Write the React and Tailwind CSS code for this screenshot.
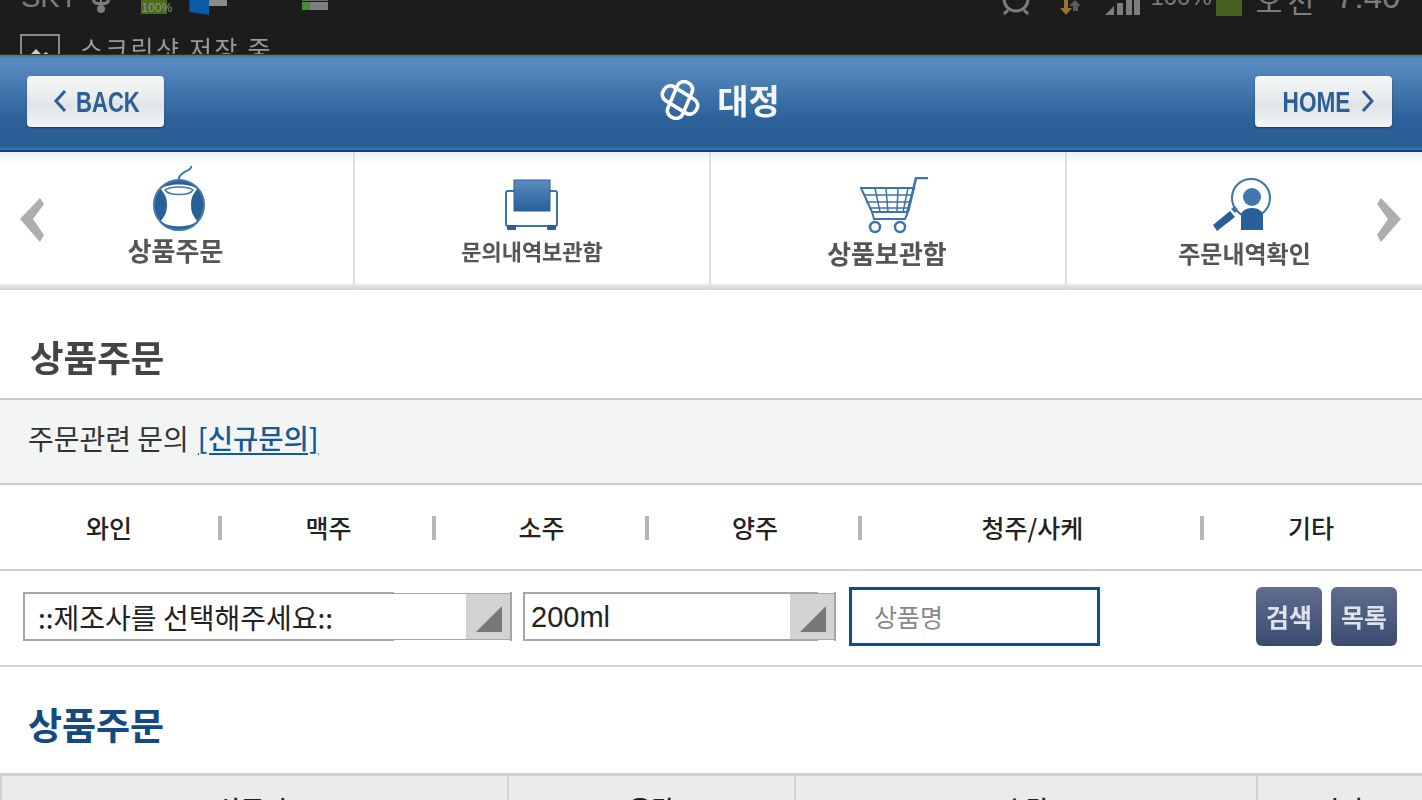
import React from 'react';

const tabs = [
  { label: '와인', width: 'w-[218px]', pad: '' },
  { label: '맥주', width: 'w-[214px]', pad: 'pl-[3px]' },
  { label: '소주', width: 'w-[213px]', pad: 'pl-[2px]' },
  { label: '양주', width: 'w-[213px]', pad: 'pl-[3px]' },
  { label: '청주/사케', width: 'w-[342px]', pad: 'pl-[3px]' },
  { label: '기타', width: 'flex-1', pad: 'pr-[4px]' },
];

// Mouse-on-a-ball icon for the order menu
const OrderIcon = () => (
  <svg className="blur-[0.4px]" width="56" height="68" viewBox="0 0 56 68" fill="none">
    <path d="M40 2c1 4-4 4-8 7s-5 5-4 10 3 4 4 6" stroke="#3f78ad" strokeWidth="2" />
    <circle cx="28" cy="41" r="25" fill="#2a6098" />
    <path d="M10 25c6-6 30-6 36 0-3 5-6 7-6 16s3 11 6 16c-6 7-30 7-36 0 3-5 6-7 6-16s-3-11-6-16z" fill="#fff" />
    <path d="M14 26c5-4 23-4 28 0-4 6-24 6-28 0z" fill="#fff" stroke="#3f78ad" strokeWidth="1.5" />
    <circle cx="28" cy="41" r="25" stroke="#3f78ad" strokeWidth="2" />
  </svg>
);

const SofaIcon = () => (
  <svg className="blur-[0.4px]" width="56" height="52" viewBox="0 0 56 52" fill="none">
    <rect x="2" y="12" width="51" height="35" rx="2" fill="#fff" stroke="#3b74ab" strokeWidth="2" />
    <rect x="3" y="46" width="9" height="5" rx="1" fill="#2a6098" />
    <rect x="43" y="46" width="9" height="5" rx="1" fill="#2a6098" />
    <rect x="10" y="1" width="36" height="31" fill="url(#sofa)" stroke="#2a6098" />
    <defs>
      <linearGradient id="sofa" x1="0" y1="0" x2="0" y2="1">
        <stop offset="0" stopColor="#5b8dbf" />
        <stop offset="1" stopColor="#27609a" />
      </linearGradient>
    </defs>
  </svg>
);

const CartIcon = () => (
  <svg className="blur-[0.4px]" width="70" height="58" viewBox="0 0 70 58" fill="none" stroke="#3b74ab">
    <path d="M68 1H56l-8 34" strokeWidth="2.5" />
    <path d="M1 11h53l-7 24H12z" strokeWidth="2" />
    <path d="M4 18h48M6 25h44M9 31h39M15 11l5 24M26 11l2 24M38 11l-1 24M48 11l-5 24" strokeWidth="1.5" />
    <path d="M12 35l2 7h31l3-7" strokeWidth="2" />
    <circle cx="15" cy="50" r="5" strokeWidth="2.5" />
    <circle cx="40" cy="50" r="5" strokeWidth="2.5" />
  </svg>
);

const SearchUserIcon = () => (
  <svg className="blur-[0.4px]" width="62" height="54" viewBox="0 0 62 54" fill="none">
    <circle cx="40" cy="20" r="19" stroke="#3b74ab" strokeWidth="2" />
    <circle cx="41" cy="19" r="9" fill="#3f78ad" />
    <path d="M30 52V38c0-5 5-8 11-8s11 3 11 8v14z" fill="#2a6098" />
    <path d="M2 47l17-14 5 6-18 14z" fill="#2a6098" />
    <path d="M20 31l4-3 3 4-3 3z" fill="#3b74ab" />
  </svg>
);

// Knot mark next to the company name: two crossed loops, turned like a pinwheel
const Logo = () => (
  <svg className="blur-[0.4px]" width="40" height="40" viewBox="0 0 40 40" fill="none" stroke="#fff" strokeWidth="3.6">
    <rect x="1" y="12" width="38" height="16" rx="7" transform="rotate(-67 20 20)" />
    <rect x="1" y="12" width="38" height="16" rx="7" transform="rotate(32 20 20)" />
  </svg>
);

const NavItem = ({ icon, label, labelSize, iconClass, border }) => (
  <div className={`flex flex-col items-center h-full ${border ? 'border-r-2 border-[#dcdfe0]' : ''}`}>
    <div className={`h-[80px] flex items-end ${iconClass}`}>{icon}</div>
    <span className={`mt-[3px] font-bold leading-[30px] text-[#555] blur-[0.7px] ${labelSize}`}>{label}</span>
  </div>
);

const HeaderButton = ({ children }) => (
  <button className="flex items-center justify-center w-[137px] h-[51px] pt-[3px] rounded-[4px] bg-[linear-gradient(#f5f7f8_0%,#e6e9eb_50%,#dfe3e5_55%,#f3f5f6_100%)] shadow-[0_1px_2px_rgba(0,0,0,0.4)] text-[#2b5f96] blur-[0.6px]">
    {children}
  </button>
);

const SelectBox = ({ width, arrow, split, children, textClass }) => (
  <div className={`relative flex items-center h-[49px] border-2 border-[#a6a6a6] bg-white ${width}`}>
    <span className={`flex-1 whitespace-nowrap text-[#222] ${textClass}`}>{children}</span>
    <div className={`flex items-end justify-end h-full bg-[#d3d3d3] pr-[8px] pb-[7px] ${arrow}`}>
      <svg width="26" height="26" viewBox="0 0 26 26"><path d="M26 0v26H0z" fill="#777" /></svg>
    </div>
    {/* the frame gets thinner toward the arrow */}
    <div className={`absolute right-0 -top-[2px] h-px bg-white ${split}`} />
    <div className={`absolute right-0 -bottom-[2px] h-px bg-white ${split}`} />
  </div>
);

const SmallButton = ({ children }) => (
  <button className="w-[66px] h-[59px] rounded-[6px] bg-[linear-gradient(#5f6d8e,#3b4a70)] text-[25px] font-bold text-[#dfe2e9]">
    <span className="blur-[0.5px] block">{children}</span>
  </button>
);

export default function App() {
  return (
    <div className="w-[1422px] h-[800px] overflow-hidden bg-white font-['Noto_Sans_CJK_KR','Noto_Sans',sans-serif]">
      {/* Phone status bar, cut off at the top */}
      <div className="h-[55px] overflow-hidden bg-[#1c1c1c] border-b border-[#3a2f12] text-[#7d7d7d]">
        <div className="flex items-start h-[34px] overflow-hidden">
          <span className="ml-[21px] -mt-[23px] text-[29px] leading-[40px] font-['Liberation_Sans']">SKT</span>
          <svg className="ml-[14px] -mt-[4px]" width="20" height="20" viewBox="0 0 20 20" fill="#7d7d7d">
            <rect x="9" y="0" width="2" height="12" />
            <path d="M1 4c1 5 4 5 9 5s8 0 9-5l-3-1c0 3-2 3-6 3S4 6 4 3z" />
            <circle cx="10" cy="13" r="4" />
          </svg>
          <div className="relative ml-[30px] w-[26px] h-[14px] bg-[#4d6a1c]">
            <span className="absolute left-0 top-[1px] text-[12px] leading-[14px] text-[#8f9a80] font-['Liberation_Sans']">100%</span>
          </div>
          <div className="ml-[22px] flex items-start">
            <div className="w-[20px] h-[15px] bg-[#0a5ba3] [clip-path:polygon(0_0,100%_0,100%_100%,0_80%)]" />
            <div className="w-[18px] h-[6px] bg-[#8a8a8a]" />
          </div>
          <div className="ml-[75px] w-[26px] flex flex-col gap-[1px]">
            <div className="h-[1px] bg-[#6a6a6a]" />
            <div className="h-[8px] flex">
              <div className="w-[8px] bg-[#4a8a32]" />
              <div className="flex-1 bg-[#7d7d7d]" />
            </div>
          </div>
          <svg className="ml-[672px] -mt-[4px]" width="32" height="20" viewBox="0 0 32 20" fill="none" stroke="#7d7d7d" strokeWidth="3">
            <circle cx="16" cy="3" r="12" />
            <path d="M4 18l4-4M28 18l-4-4" />
          </svg>
          <svg className="ml-[28px]" width="22" height="16" viewBox="0 0 22 16">
            <path d="M4 0h4v8h4l-6 7-6-7h4z" fill="#9a7434" />
            <path d="M15 0l6 6h-3v5h-5V6h-4z" fill="#5a5a5a" />
          </svg>
          <svg className="ml-[23px]" width="36" height="15" viewBox="0 0 36 15" fill="#7d7d7d">
            <path d="M0 15L9 6v9zM12 3h6v12h-6zM21 0h6v15h-6zM29 0h6v15h-6z" />
          </svg>
          <span className="ml-[9px] -mt-[23px] text-[24px] leading-[40px] font-['Liberation_Sans']">100%</span>
          <div className="ml-[4px] w-[26px] h-[16px] bg-[#475f1f]" />
          <span className="ml-[14px] -mt-[20px] text-[29px] leading-[40px] tracking-[5px]">오전</span>
          <span className="ml-[17px] -mt-[23px] text-[33px] leading-[40px] font-['Liberation_Sans']">7:40</span>
        </div>
        <div className="flex items-start">
          <div className="ml-[20px] w-[40px] h-[26px] border-2 border-[#8a8a8a] flex items-end justify-center">
            <svg width="26" height="12" viewBox="0 0 26 12" fill="#cfcfcf"><path d="M0 12l9-9 6 6 4-3 7 6z" /></svg>
          </div>
          <span className="ml-[20px] -mt-[4px] text-[25px] leading-[36px] tracking-[2.3px] text-[#9a9a9a] blur-[0.4px]">스크린샷 저장 중</span>
        </div>
      </div>

      {/* Blue title bar */}
      <div className="flex items-center justify-between h-[97px] pl-[27px] pr-[30px] pb-[3px] border-b-2 border-[#0a3f8c] bg-[linear-gradient(#3d74ad_0%,#588ac0_4%,#4f83b9_20%,#2c6199_68%,#295e95_95%,#3a74a8_100%)]">
        <HeaderButton>
          <svg className="mr-[1px] -mt-[3px]" width="14" height="24" viewBox="0 0 14 24" fill="none" stroke="#2b5f96" strokeWidth="3"><path d="M12 2L3 12l9 10" /></svg>
          <span className="-ml-[2px] -mr-[12px] text-[29px] font-bold font-['Liberation_Sans'] scale-x-[0.76]">BACK</span>
        </HeaderButton>
        <div className="flex items-center gap-[17px] ml-[21px] mb-[3px]">
          <Logo />
          <span className="text-[34px] leading-[44px] font-bold text-[#f4f7fa] blur-[0.6px]">대정</span>
        </div>
        <HeaderButton>
          <span className="-mx-[9px] text-[29px] font-bold font-['Liberation_Sans'] scale-x-[0.78]">HOME</span>
          <svg className="ml-[10px] -mr-[9px] -mt-[3px]" width="14" height="24" viewBox="0 0 14 24" fill="none" stroke="#2b5f96" strokeWidth="3"><path d="M2 2l9 10-9 10" /></svg>
        </HeaderButton>
      </div>

      {/* Icon menu */}
      <div className="relative">
        <div className="grid grid-cols-[355px_356px_356px_355px] h-[138px] bg-[linear-gradient(#eef1f4_0px,#ffffff_12px,#ffffff_131px,#e6e8e9_133px,#d2d5d6_137px)]">
          <NavItem icon={<OrderIcon />} label="상품주문" labelSize="text-[26px] -translate-x-[1px]" iconClass="translate-x-[2px]" border />
          <NavItem icon={<SofaIcon />} label="문의내역보관함" labelSize="text-[22px]" iconClass="-translate-y-[1px]" border />
          <NavItem icon={<CartIcon />} label="상품보관함" labelSize="text-[26px] -translate-x-[1px] translate-y-[3px]" iconClass="translate-x-[7px] translate-y-[3px]" border />
          <NavItem icon={<SearchUserIcon />} label="주문내역확인" labelSize="text-[24px] translate-y-[3px]" iconClass="-translate-x-[3px]" />
        </div>
        <svg className="absolute left-[19px] top-[45px] blur-[0.7px]" width="26" height="46" viewBox="0 0 26 46" fill="#aeaeae"><path d="M1 22L21 1l4 6-11 15 11 16-4 7z" /></svg>
        <svg className="absolute left-[1376px] top-[45px] blur-[0.7px]" width="26" height="46" viewBox="0 0 26 46" fill="#aeaeae"><path d="M25 22L5 1 1 7l11 15L1 38l4 7z" /></svg>
      </div>

      {/* Page heading */}
      <div className="flex items-center h-[110px] pl-[30px] pt-[26px] border-b-2 border-[#c6c8c8]">
        <h1 className="text-[36.5px] font-bold text-[#444] blur-[0.7px]">상품주문</h1>
      </div>

      <div className="flex items-center h-[85px] pl-[28px] pb-[8px] bg-[#f3f5f5] border-b-2 border-[#c9cbcb] text-[28px] text-[#333]">
        <span>주문관련 문의</span>
        <a className="ml-[9px] text-[27.5px] font-medium text-[#135a96] underline decoration-2 underline-offset-[4px]">[신규문의]</a>
      </div>

      {/* Category tabs */}
      <div className="flex items-center h-[86px] pt-[1px] border-b-2 border-[#d0d0d0]">
        {tabs.map((tab, i) => (
          <div key={tab.label} className={`flex items-center h-[24px] ${tab.width}`}>
            {i > 0 && <div className="w-[4px] h-[24px] bg-[#b8b6b6]" />}
            <span className={`flex-1 text-center text-[25px] font-medium text-[#222] ${tab.pad}`}>{tab.label}</span>
          </div>
        ))}
      </div>

      {/* Search filters */}
      <div className="flex items-center h-[96px] pl-[23px] pr-[25px] pb-[3px] border-b-2 border-[#d4d4d4]">
        <SelectBox width="w-[489px]" arrow="w-[44px]" split="w-[116px]" textClass="pl-[13px] text-[28px]">::제조사를 선택해주세요::</SelectBox>
        <div className="ml-[11px]">
          <SelectBox width="w-[313px]" arrow="w-[44px]" split="w-[16px]" textClass="pl-[6px] pt-[3px] text-[29px] font-['Liberation_Sans']">200ml</SelectBox>
        </div>
        <div className="flex items-center ml-[13px] w-[251px] h-[59px] pl-[22px] border-[3px] border-[#0f4e8e] text-[25px] text-[#888]">상품명</div>
        <div className="flex gap-[9px] ml-auto">
          <SmallButton>검색</SmallButton>
          <SmallButton>목록</SmallButton>
        </div>
      </div>

      <div className="flex items-center h-[106px] pl-[28px] pt-[10px]">
        <h2 className="text-[37px] font-bold text-[#154a80]">상품주문</h2>
      </div>

      {/* Order table, only the header shows */}
      <div className="grid grid-cols-[507px_287px_462px_166px] h-[60px] border-t-[3px] border-[#d2d2d2] bg-[#ebebeb] text-[25px] font-medium text-[#222] text-center">
        <div className="pt-[14px] pr-[4px] border-l-2 border-[#d2d2d2]">상품명</div>
        <div className="pt-[14px] border-l-2 border-[#d2d2d2]">용량</div>
        <div className="pt-[14px] border-l-2 border-[#d2d2d2]">수량</div>
        <div className="pt-[14px] border-l-2 border-[#d2d2d2]">관리</div>
      </div>
    </div>
  );
}
